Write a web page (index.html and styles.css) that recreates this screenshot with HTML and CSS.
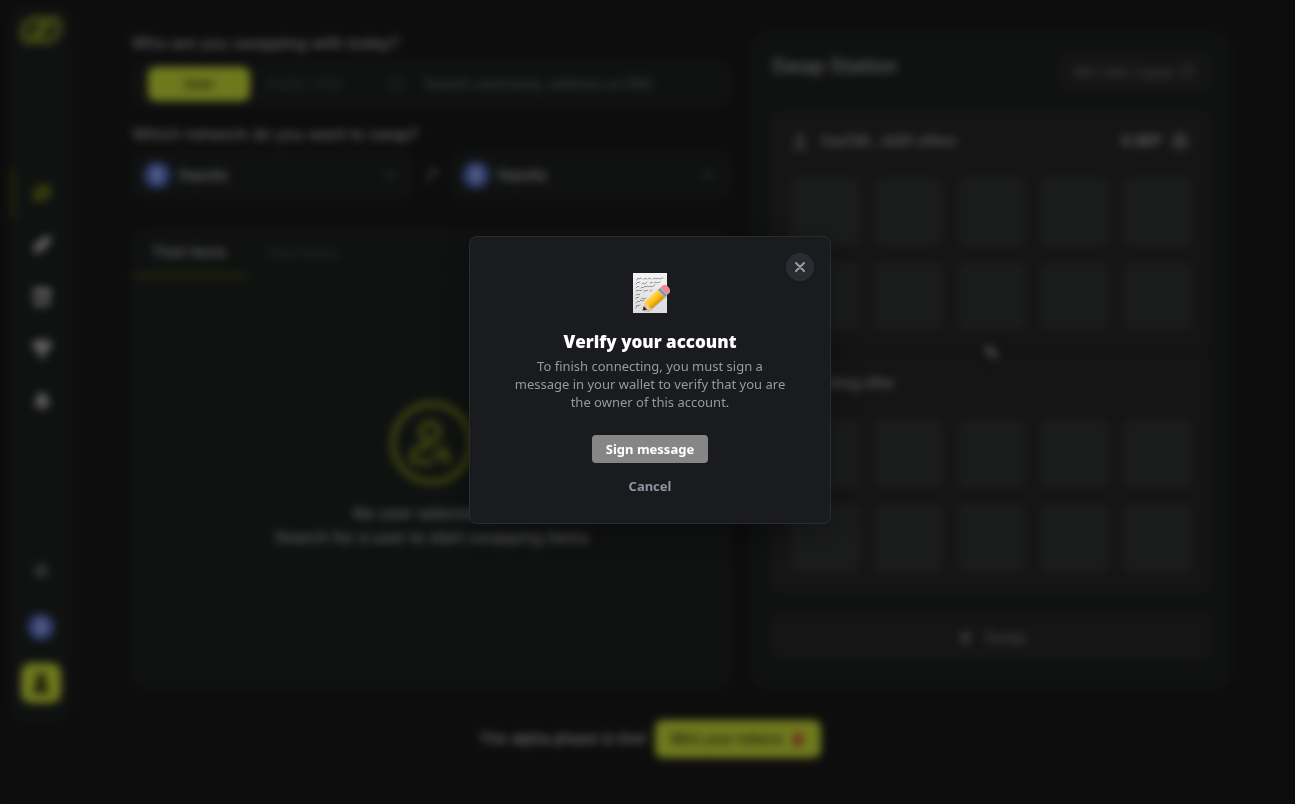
FILE: index.html
```html
<!DOCTYPE html>
<html lang="en">
<head>
<meta charset="utf-8">
<title>Swap</title>
<meta name="viewport" content="width=device-width, initial-scale=1">
<link rel="stylesheet" href="styles.css">
</head>
<body>
<div class="app">
  <div class="shell">
    <aside class="sidebar">
      <a class="logo" href="#" aria-label="Home">
        <svg width="44" height="32" viewBox="0 0 44 32" fill="none" stroke="currentColor" stroke-width="6" stroke-linecap="round" stroke-linejoin="round"><path id="hook" d="M23 5h-4C10 5 4 11 4 19c0 9 8 11 14 5L30 11"/><use href="#hook" transform="rotate(180 22 16)"/></svg>
      </a>
      <nav class="nav">
        <a class="nav-item active" href="#" aria-label="Swap"><svg width="20" height="22" viewBox="0 0 20 22" fill="none" stroke="currentColor" stroke-width="4" stroke-linecap="round"><path d="M3 14c0-6 3-9 7-9h7M17 8c0 6-3 9-7 9H3M6 14l8-6"/></svg></a>
        <a class="nav-item" href="#" aria-label="Offers"><svg width="22" height="20" viewBox="0 0 22 20" fill="currentColor"><path d="M1 12L13 2l8-1-3 8L8 18H2l3-5z"/></svg></a>
        <a class="nav-item" href="#" aria-label="Market"><svg width="20" height="20" viewBox="0 0 20 20" fill="currentColor"><path d="M1 1h18v7H1zM2 9h3v5h7V9h2v10H2zM15 9h3v10h-3z"/></svg></a>
        <a class="nav-item" href="#" aria-label="Ranking"><svg width="20" height="20" viewBox="0 0 20 20" fill="currentColor"><path d="M4 1h12v2h4c0 5-2 8-5 8l-3 4v2h2v2H6v-2h2v-2l-3-4C2 11 0 8 0 3h4z"/></svg></a>
        <a class="nav-item" href="#" aria-label="Notifications"><svg width="18" height="20" viewBox="0 0 18 20" fill="currentColor"><path d="M9 1c4 2 6 5 6 9l2 5H1l2-5c0-4 2-7 6-9zM6 16h6c0 4-6 4-6 0z"/></svg></a>
      </nav>
      <div class="side-tools">
        <button class="tool" type="button" aria-label="Theme"><svg width="20" height="20" viewBox="0 0 20 20" fill="none" stroke="currentColor" stroke-width="2"><circle cx="10" cy="10" r="4" fill="currentColor"/><path d="M10 1v3M10 16v3M1 10h3M16 10h3M4 4l2 2M14 14l2 2M4 16l2-2M14 6l2-2"/></svg></button>
        <button class="tool" type="button" aria-label="Network"><span class="coin"><svg width="10" height="16" viewBox="0 0 10 16" fill="currentColor"><path d="M5 0l5 8-5 3-5-3zM5 12l5-3-5 7-5-7z"/></svg></span></button>
        <button class="tool profile" type="button" aria-label="Profile"><svg width="20" height="22" viewBox="0 0 20 22" fill="currentColor"><circle cx="10" cy="6" r="5"/><path d="M7 10h6l5 8v3H2v-3z"/></svg></button>
      </div>
    </aside>

    <main class="main">
      <section class="left">
        <h2 class="label">Who are you swapping with today?</h2>
        <div class="search">
          <button class="seg on" type="button">User</button>
          <button class="seg" type="button">Public offer</button>
          <span class="divider"></span>
          <svg class="glass" width="18" height="18" viewBox="0 0 18 18" fill="none" stroke="currentColor" stroke-width="2"><circle cx="8" cy="8" r="6"/><path d="M12 12l5 5"/></svg>
          <input class="query" type="text" aria-label="Search user" placeholder="Search username, address or ENS">
        </div>
        <h2 class="label">Which network do you want to swap?</h2>
        <div class="networks">
          <button class="network" type="button"><span class="coin"><svg width="10" height="16" viewBox="0 0 10 16" fill="currentColor"><path d="M5 0l5 8-5 3-5-3zM5 12l5-3-5 7-5-7z"/></svg></span><span>Sepolia</span><svg class="chev" width="14" height="8" viewBox="0 0 14 8" fill="none" stroke="currentColor" stroke-width="2"><path d="M2 1l5 5 5-5"/></svg></button>
          <svg class="between" width="14" height="14" viewBox="0 0 14 14" fill="none" stroke="currentColor" stroke-width="2"><path d="M3 2h9v5M2 13L12 2M2 8v5"/></svg>
          <button class="network" type="button"><span class="coin"><svg width="10" height="16" viewBox="0 0 10 16" fill="currentColor"><path d="M5 0l5 8-5 3-5-3zM5 12l5-3-5 7-5-7z"/></svg></span><span>Sepolia</span><svg class="chev" width="14" height="8" viewBox="0 0 14 8" fill="none" stroke="currentColor" stroke-width="2"><path d="M2 1l5 5 5-5"/></svg></button>
        </div>
        <div class="items">
          <div class="tabs">
            <button class="tab on" type="button">Their items</button>
            <button class="tab" type="button">Your items</button>
          </div>
          <div class="empty">
            <svg class="empty-icon" width="86" height="86" viewBox="0 0 86 86" fill="none" stroke="currentColor" stroke-width="6"><circle cx="43" cy="43" r="39"/><circle cx="41" cy="32" r="9" stroke-width="6"/><path d="M44 62H27c-6 0-4-9 0-12 4-3 9-4 14-3" stroke-width="6"/><circle cx="53" cy="54" r="5" stroke-width="5"/><path d="M56 57l6 6" stroke-width="5"/></svg>
            <p>No user selected yet</p>
            <p>Search for a user to start swapping items</p>
          </div>
        </div>
      </section>

      <section class="station">
        <header class="station-head">
          <h1>Swap Station</h1>
          <button class="expiry" type="button">dd / mm / yyyy <svg width="16" height="16" viewBox="0 0 16 16" fill="none" stroke="currentColor" stroke-width="1"><path d="M2 3h12v11H2zM2 6h12M5 0v3M11 0v3"/></svg></button>
        </header>
        <div class="cards">
          <div class="card">
            <div class="card-head">
              <svg class="avatar" width="18" height="20" viewBox="0 0 20 22" fill="currentColor"><circle cx="10" cy="6" r="5"/><path d="M7 10h6l5 8v3H2v-3z"/></svg>
              <span>0xe136...4d0f offers</span>
              <span class="amount">0 SEP</span>
              <button class="plus" type="button" aria-label="Add amount"><svg width="10" height="10" viewBox="0 0 12 12" fill="none" stroke="currentColor" stroke-width="3"><path d="M6 1v10M1 6h10"/></svg></button>
            </div>
            <div class="tiles"><i></i><i></i><i></i><i></i><i></i><i></i><i></i><i></i><i></i><i></i></div>
          </div>
          <span class="flip"><svg width="16" height="16" viewBox="0 0 16 16" fill="none" stroke="currentColor" stroke-width="3"><path d="M5 13V2L1 6M11 3v11l4-4M5 3l6 10"/></svg></span>
          <div class="card">
            <div class="card-head"><span>Searching offer</span></div>
            <div class="tiles"><i></i><i></i><i></i><i></i><i></i><i></i><i></i><i></i><i></i><i></i></div>
          </div>
        </div>
        <button class="swap" type="button"><svg width="16" height="16" viewBox="0 0 16 16" fill="currentColor"><path d="M1 9L14 1l-2 14H7V9z"/></svg>Swap</button>
      </section>
    </main>
  </div>
  <footer class="promo">
    <span>The alpha phase is live!</span>
    <button class="mint" type="button">Mint your tokens <svg width="14" height="16" viewBox="0 0 14 16"><path d="M7 1l6 6-3 8H4L1 7z" fill="#d8552e"/></svg></button>
  </footer>
</div>

<div class="overlay">
  <div class="dialog" role="dialog" aria-modal="true" aria-labelledby="verify-title">
    <button class="close" type="button" aria-label="Close"><svg width="10" height="10" viewBox="0 0 10 10" fill="none" stroke="currentColor" stroke-width="2" stroke-linecap="round"><path d="M1 1l8 8M9 1L1 9"/></svg></button>
    <svg class="memo" width="40" height="40" viewBox="0 0 40 40">
      <defs>
        <linearGradient id="paper" x1="0" y1="0" x2="0" y2="1"><stop offset="0" stop-color="#f3f3f3"/><stop offset="1" stop-color="#dcdcdc"/></linearGradient>
        <linearGradient id="wood" x1="0" y1="0" x2="0" y2="1"><stop offset="0" stop-color="#ffd84a"/><stop offset=".5" stop-color="#fcc11c"/><stop offset="1" stop-color="#d98d08"/></linearGradient>
      </defs>
      <path d="M3 0h34v40H3z" fill="url(#paper)"/>
      <g fill="none" stroke="#5c5c5c" stroke-width=".6" stroke-linecap="round">
        <path d="M7 7l1-2 1 1 2-1 1 1M14 6l2-1v1M18 6l2-1 1 1M23 6l2-1 1 1 2-1 1 1 4-1"/>
        <path d="M6 11l2-2 1 1 1-1M12 11l1-1 2 1 2-2M20 10l2-1v1M24 10l2-1 1 1 3-1"/>
        <path d="M6 15l2-2 1 1M11 15l1-1 1 1 2-2 1 1 2-1 1 1 2-1 1 1 3-2"/>
        <path d="M6 18l1-1 1 1 2-1 1 1 1-1M14 19l1-2 1 1 2-1M20 18l2-1"/>
        <path d="M6 22l2-1 1 1 1-1"/>
        <path d="M6 26l1-2 1 1 1-1M11 26l2-1 1 1 2-1"/>
        <path d="M6 30l2-2 1 1 2-2 1 1 2-1"/>
        <path d="M6 35l1-3 1 1 2-1"/>
      </g>
      <path d="M13 38l23-18 1 4-18 15z" fill="#777" opacity=".3"/>
      <g transform="translate(12.5 37.5) rotate(-42)">
        <path d="M0 0l8-5v10z" fill="#efcb97"/>
        <path d="M0 0l4-2.500v5z" fill="#2c2c2c"/>
        <path d="M7-4.500L8-5h17V5H8l-1-3 1-2-1-2z" fill="url(#wood)"/>
        <path d="M25-5h4V5h-4z" fill="#9fa6b2"/>
        <path d="M27-5V5" stroke="#737b8a" stroke-width=".8"/>
        <path d="M29-5h3c4 0 4 10 0 10h-3z" fill="#ee8a93"/>
      </g>
    </svg>
    <h2 class="title" id="verify-title">Verify your account</h2>
    <p class="body">To finish connecting, you must sign a message in your wallet to verify that you are the owner of this account.</p>
    <button class="sign" type="button">Sign message</button>
    <button class="cancel" type="button">Cancel</button>
  </div>
</div>
</body>
</html>
```
FILE: styles.css
```css
* { box-sizing: border-box; margin: 0; }
html, body { height: 100%; }
body {
  background: #1a1a1a;
  color: #b4b8b5;
  font: 500 16px/20px Inter, sans-serif;
  overflow: hidden;
}
button { border: 0; padding: 0; background: none; color: inherit; font: inherit; cursor: pointer; }
a { color: inherit; }
svg { display: block; flex: none; }

.app { padding-top: 8px; isolation: isolate; }
.shell { display: flex; padding-left: 12px; }

.sidebar {
  width: 58px;
  flex: none;
  display: flex;
  flex-direction: column;
  align-items: center;
  padding: 6px 0 17px;
  background: #202422;
  border-radius: 12px;
}
.logo { color: #8a9628; }
.nav { width: 100%; margin-top: 121px; }
.nav-item {
  height: 52px;
  display: flex;
  align-items: center;
  justify-content: center;
  border-left: 2px solid transparent;
  color: #c4c4c4;
}
.nav-item.active { color: #7a8614; border-left-color: #7a8614; }
.side-tools { margin-top: auto; display: flex; flex-direction: column; align-items: center; gap: 16px; }
.tool { width: 40px; height: 40px; display: grid; place-items: center; color: #70757a; }
.profile { background: #ddf23d; color: #35380f; border-radius: 10px; }
.coin {
  width: 26px;
  height: 26px;
  flex: none;
  display: grid;
  place-items: center;
  border-radius: 50%;
  background: #627eea;
  color: #d4dcff;
}

.main {
  flex: 1;
  display: grid;
  grid-template-columns: 5fr 4fr;
  gap: 20px;
  padding: 25px 64px 32px 62px;
}
.left { display: flex; flex-direction: column; }
.label { font-size: 16px; font-weight: 500; line-height: 20px; }
.search {
  height: 46px;
  margin: 8px 0 17px;
  padding: 0 16px;
  display: flex;
  align-items: center;
  border-radius: 12px;
  background: #202422;
}
.seg { height: 34px; width: 102px; font-size: 14px; color: #4c524e; border-radius: 8px; }
.seg.on { background: #ddf23d; color: #35380f; }
.seg + .seg { margin-left: 4px; }
.divider { width: 2px; height: 46px; margin-left: 14px; background: #292c2a; }
.glass { margin-left: 16px; color: #454a47; }
.query {
  flex: 1;
  min-width: 0;
  margin-left: 18px;
  border: 0;
  padding: 0;
  background: none;
  color: inherit;
  font: 500 14px/20px Inter, sans-serif;
}
.query::placeholder { color: #707572; opacity: 1; }
.networks { display: flex; align-items: center; gap: 12px; margin: 8px 0 31px; }
.network {
  flex: 1;
  height: 46px;
  padding: 0 16px 0 12px;
  display: flex;
  align-items: center;
  gap: 8px;
  border-radius: 12px;
  background: #202422;
  color: #c8c8c4;
  font-size: 14px;
}
.chev { margin-left: auto; color: #6a706c; }
.between { color: #6a706c; }
.items { flex: 1; display: flex; flex-direction: column; background: #202422; border-radius: 16px; }
.tabs { display: flex; border-bottom: 1px solid #2c2f2d; }
.tab { width: 114px; height: 48px; font-size: 14px; color: #4c524e; }
.tab.on { color: #c4c4c4; border-bottom: 3px solid #59611a; }
.empty { flex: 1; display: flex; flex-direction: column; align-items: center; padding-top: 122px; text-align: center; }
.empty p { line-height: 24px; }
.empty-icon { margin-bottom: 15px; color: #7d8a1e; }

.station { padding: 18px 20px 28px; background: #202422; border-radius: 16px; }
.station-head { display: flex; justify-content: space-between; margin-bottom: 19px; }
.station-head h1 { font-size: 20px; font-weight: 500; line-height: 30px; }
.expiry {
  height: 42px;
  padding: 0 16px;
  display: flex;
  align-items: center;
  gap: 6px;
  border-radius: 12px;
  background: #272928;
  color: #808582;
  font-size: 14px;
}
.cards { display: grid; gap: 2px; }
.card { grid-column: 1; padding: 16px 20px 20px; background: #2a2a2a; border-radius: 12px; }
.flip {
  grid-column: 1;
  justify-self: center;
  width: 28px;
  height: 28px;
  margin: -14px 0;
  display: grid;
  place-items: center;
  border-radius: 50%;
  background: #202422;
  color: #868c88;
  z-index: 1;
}
.card-head { height: 26px; margin-bottom: 24px; display: flex; align-items: center; font-size: 14px; }
.avatar { margin-right: 12px; color: #5c6460; }
.amount { margin-left: auto; color: #e4e4dc; }
.plus { width: 22px; height: 22px; margin-left: 8px; display: grid; place-items: center; border-radius: 50%; background: #464846; }
.tiles { display: grid; grid-template-columns: repeat(5, 1fr); gap: 16px; }
.tiles i { height: 68px; border-radius: 8px; background: #353937; }
.swap {
  width: 100%;
  height: 46px;
  margin-top: 22px;
  display: flex;
  align-items: center;
  justify-content: center;
  gap: 12px;
  border-radius: 12px;
  background: #2a2a2a;
  color: #787e7a;
}

.promo { display: flex; align-items: center; justify-content: center; gap: 8px; padding-left: 5px; color: #d4d4d6; font-size: 15px; }
.mint {
  height: 38px;
  padding: 0 16px;
  display: flex;
  align-items: center;
  gap: 8px;
  border-radius: 8px;
  background: #ddf23d;
  color: #35380f;
  font-size: 14px;
}

.overlay {
  position: fixed;
  inset: 0;
  display: flex;
  align-items: center;
  justify-content: center;
  padding: 0 0 44px 5px;
  background: rgba(0, 0, 0, .5);
  backdrop-filter: blur(4px);
}
.dialog {
  position: relative;
  width: 362px;
  padding: 36px 40px 25px;
  display: flex;
  flex-direction: column;
  align-items: center;
  border: 1px solid #2b2c30;
  border-radius: 8px;
  background: #1a1b1f;
  box-shadow: 0 8px 32px rgba(0, 0, 0, .32);
  font-family: "Noto Sans", sans-serif;
  text-align: center;
}
.close {
  position: absolute;
  top: 16px;
  right: 16px;
  width: 28px;
  height: 28px;
  display: grid;
  place-items: center;
  border: 1px solid #303135;
  border-radius: 50%;
  background: #2b2c30;
  color: #9a9cae;
}
.title { margin-top: 17px; color: #fff; font: 800 17px/24px "Open Sans", "Noto Sans", sans-serif; }
.body { margin-top: 3px; color: #999; font-size: 13px; font-weight: 400; line-height: 18px; }
.sign {
  height: 28px;
  margin-top: 24px;
  padding: 0 14px;
  border-radius: 4px;
  background: #868686;
  color: #fff;
  font-size: 13px;
  font-weight: 700;
}
.cancel { height: 24px; margin-top: 11px; color: #9193a2; font-size: 13px; font-weight: 700; }
```
